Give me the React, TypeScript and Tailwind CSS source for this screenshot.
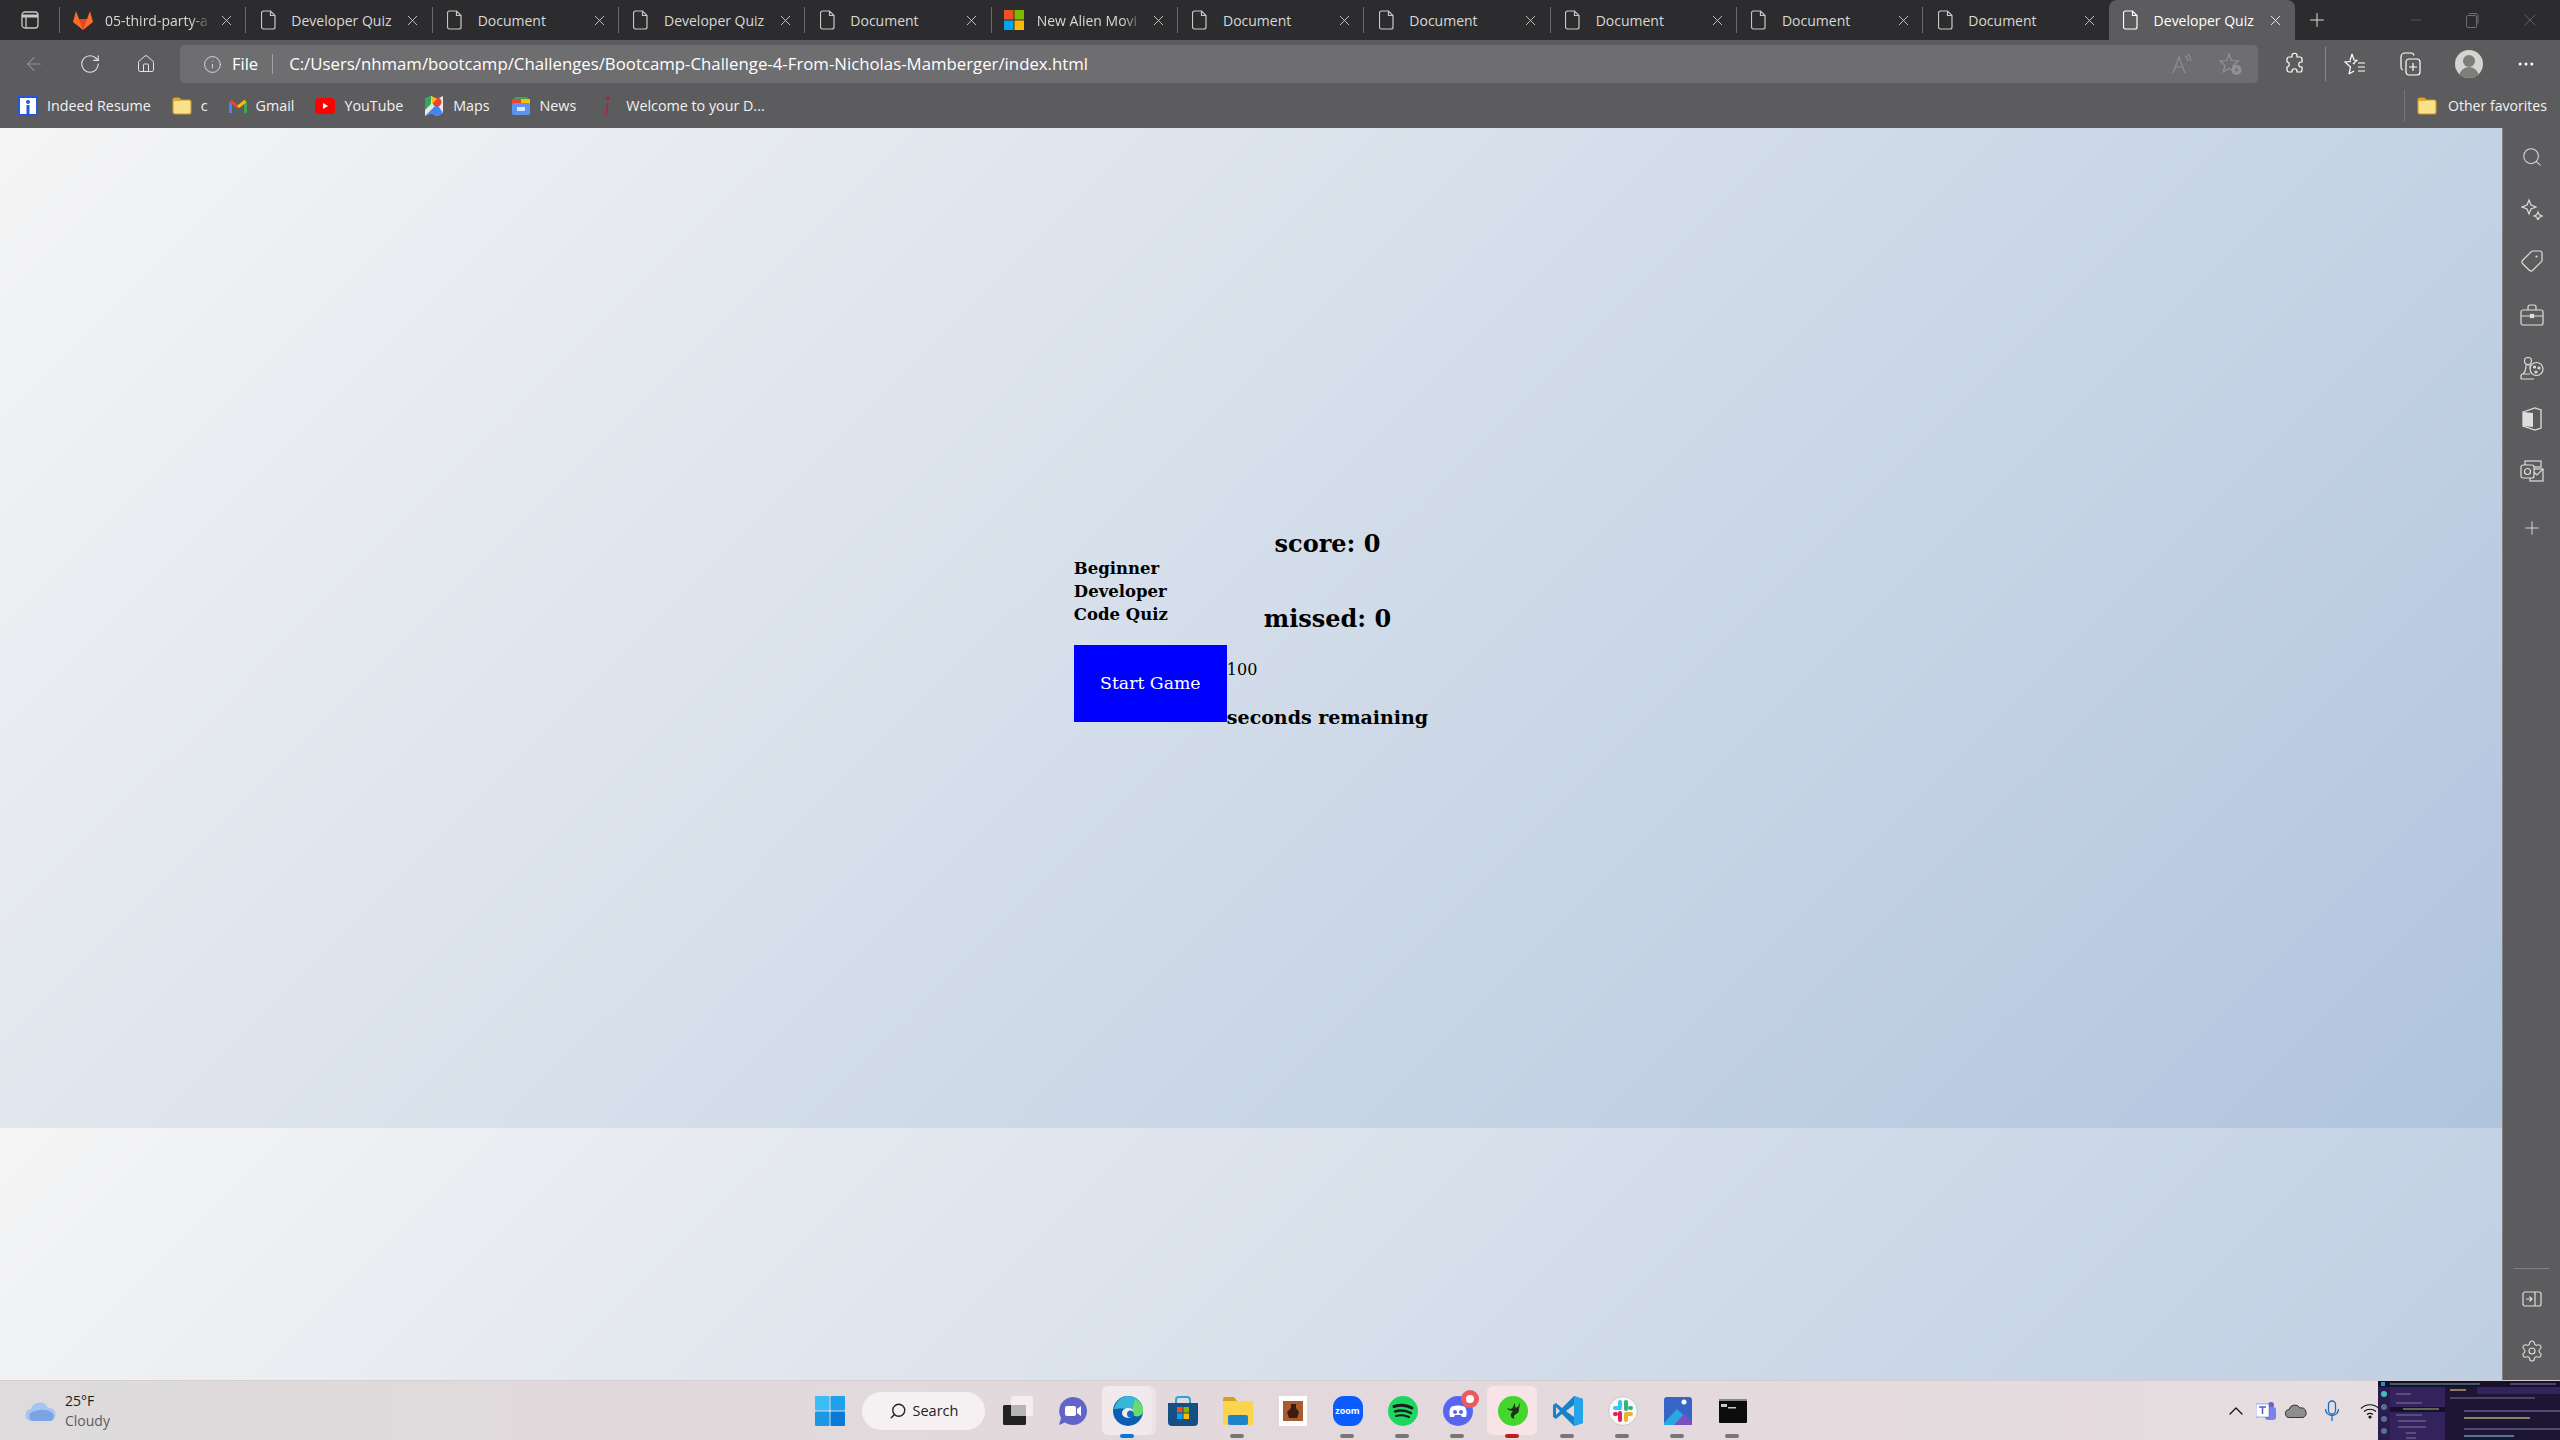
import { ArrowLeft, ChevronUp, Home, Info, Minus, MoreHorizontal, Plus, RotateCw, Search, Settings, Tag, X } from "lucide-react"

const uiFont = "font-['Open_Sans','Noto_Sans',sans-serif]"
const quizFont = "font-['DejaVu_Serif',serif]"

const tabs = [
  { title: "05-third-party-a", icon: "gitlab", fade: true },
  { title: "Developer Quiz", icon: "page" },
  { title: "Document", icon: "page" },
  { title: "Developer Quiz", icon: "page" },
  { title: "Document", icon: "page" },
  { title: "New Alien Movi", icon: "ms", fade: true },
  { title: "Document", icon: "page" },
  { title: "Document", icon: "page" },
  { title: "Document", icon: "page" },
  { title: "Document", icon: "page" },
  { title: "Document", icon: "page" },
  { title: "Developer Quiz", icon: "page", active: true },
]

function PageIcon({ light }: { light?: boolean }) {
  return (
    <svg width="16" height="20" viewBox="0 0 16 20" fill="none" stroke={light ? "#ffffff" : "#c8c8c8"} strokeWidth="1.2">
      <path d="M2.5 1h7l4.5 4.5v11.5a2 2 0 0 1-2 2h-9.500a2 2 0 0 1-2-2v-14a2 2 0 0 1 2-2z" />
      <path d="M9.500 1v4.500h4.500" />
    </svg>
  )
}

function GitlabIcon() {
  return (
    <svg width="22" height="22" viewBox="0 0 22 22">
      <path d="M11 21 1 13l3-11 3 8h8l3-8 3 11z" fill="#fc6d26" />
      <path d="M11 21 7 10h8z" fill="#e24329" />
    </svg>
  )
}

function MsIcon() {
  return (
    <svg width="20" height="20" viewBox="0 0 20 20">
      <rect width="9.500" height="9.500" fill="#f25022" />
      <rect x="10.500" width="9.500" height="9.500" fill="#7fba00" />
      <rect y="10.500" width="9.500" height="9.500" fill="#00a4ef" />
      <rect x="10.500" y="10.500" width="9.500" height="9.500" fill="#ffb900" />
    </svg>
  )
}

function FolderIcon() {
  return (
    <svg width="20" height="18" viewBox="0 0 20 18">
      <path d="M1 3a2 2 0 0 1 2-2h4l2 2h8a2 2 0 0 1 2 2v10a2 2 0 0 1-2 2H3a2 2 0 0 1-2-2z" fill="#fbe28a" stroke="#c99a2e" strokeWidth="1.200" />
      <path d="M1 3a2 2 0 0 1 2-2h4l2 2v1H1z" fill="#e0a92a" />
    </svg>
  )
}

function Tab({ title, icon, active, fade }: { title: string; icon: string; active?: boolean; fade?: boolean }) {
  return (
    <div className={`relative flex h-full w-[186.33px] shrink-0 items-center ${active ? "rounded-t-lg bg-[#5c5c5e] text-white" : "text-[#d8d8d8]"}`}>
      {!active && <div className="h-[26px] w-px shrink-0 bg-[#6a6a6c]" />}
      <div className="flex w-[45px] shrink-0 justify-center">
        {icon === "gitlab" && <GitlabIcon />}
        {icon === "ms" && <MsIcon />}
        {icon === "page" && <PageIcon light={active} />}
      </div>
      <span className={`w-[107px] overflow-hidden text-[14px] whitespace-nowrap ${fade ? "[mask-image:linear-gradient(to_right,black_80%,transparent)]" : ""}`}>{title}</span>
      <X size={17} strokeWidth={1.2} className="ml-[6px] shrink-0" />
    </div>
  )
}

function TabBar() {
  return (
    <div className="flex h-10 shrink-0 items-center bg-[#2c2c2e]">
      <div className="flex w-[59px] shrink-0 justify-center">
        <svg width="18" height="18" viewBox="0 0 18 18" fill="none" stroke="#c8c8c8" strokeWidth="1.300">
          <rect x="1" y="1" width="16" height="16" rx="3" />
          <path d="M1 5h16" strokeWidth="3" />
          <path d="M5 5v12" />
        </svg>
      </div>
      {tabs.map((tab, i) => (
        <Tab key={i} title={tab.title} icon={tab.icon} active={tab.active} fade={tab.fade} />
      ))}
      <Plus size={22} strokeWidth={1.1} className="ml-[11px] text-[#dcdcdc]" />
      <div className="ml-auto flex items-center text-[#6e6e70]">
        <Minus size={16} strokeWidth={1} className="mr-[40px]" />
        <svg width="16" height="16" viewBox="0 0 16 16" fill="none" stroke="currentColor" className="mr-[40px]">
          <rect x="2.500" y="3.500" width="10" height="12" rx="1.500" />
          <path d="M5 1.500h7a2 2 0 0 1 2 2v8" />
        </svg>
        <X size={20} strokeWidth={1} className="mr-[20px]" />
      </div>
    </div>
  )
}

function ToolBar() {
  return (
    <div className="flex h-[44px] shrink-0 items-start bg-[#5c5c5e] pt-[5px] text-[#e4e4e4]">
      <div className="flex h-[38px] w-[180px] shrink-0 items-center pl-[23px]">
        <ArrowLeft size={22} strokeWidth={1.1} className="text-[#929294]" />
        <RotateCw size={22} strokeWidth={1.2} className="ml-[34px]" />
        <Home size={20} strokeWidth={1.2} className="ml-[35px]" />
      </div>
      <div className="flex h-[38px] w-[2078px] shrink-0 items-center rounded-[5px] bg-[#6e6e70] pl-[23px] text-[16.500px]">
        <Info size={19} strokeWidth={1.1} />
        <span className="ml-[10px] text-white">File</span>
        <div className="ml-[14px] h-5 w-px bg-[#a0a0a2]" />
        <span className="ml-[16px] text-[16.800px] text-white">C:/Users/nhmam/bootcamp/Challenges/Bootcamp-Challenge-4-From-Nicholas-Mamberger/index.html</span>
        <div className="ml-auto flex items-center pr-[15px] text-[#929294]">
          <svg width="22" height="22" viewBox="0 0 22 22" fill="none" stroke="currentColor" strokeWidth="1.100">
            <path d="M2 20 8 4l6 16M4.500 14h7M14 3c2 1 3 3 3 5M17 1c2 2 3 4 3 7" />
          </svg>
          <svg width="24" height="24" viewBox="0 0 24 24" fill="none" stroke="currentColor" strokeWidth="1.200" className="ml-[26px]">
            <path d="M10 2l2.500 6.500 7 .5-5.500 4.500 1.800 6.500-5.800-3.800-5.800 3.800 1.800-6.500-5-4.500 7-.5z" />
            <circle cx="17.500" cy="18" r="5" fill="#929294" stroke="none" />
            <path d="M15 18h5M17.500 15.500v5" stroke="#6e6e70" />
          </svg>
        </div>
      </div>
      <div className="flex h-[38px] flex-1 items-center text-white">
        <svg width="20" height="24" viewBox="0 0 20 24" fill="none" stroke="currentColor" strokeWidth="1.200" className="ml-[27px]">
          <path d="M7 3.500c0-3 5-3 5 0v1.500h3a2 2 0 0 1 2 2v3h-1c-3 0-3 5 0 5h1v3a2 2 0 0 1-2 2h-3v-1c0-3-5-3-5 0v1H4a2 2 0 0 1-2-2v-3c3 0 3-5 0-5V7a2 2 0 0 1 2-2h3z" />
        </svg>
        <div className="ml-[20px] h-[34px] w-px bg-[#8a8a8c]" />
        <svg width="24" height="24" viewBox="0 0 24 24" fill="none" stroke="currentColor" strokeWidth="1.200" className="ml-[17px]">
          <path d="M9 2l2 6 3 .3-3.500 3.200 1 .5M6 22l1.500-7-5.500-5 6-.5M6 22l5-3M9 2 7 8.500" />
          <path d="M15 11h7M15 15h7M15 19h7" />
        </svg>
        <svg width="24" height="26" viewBox="0 0 24 26" fill="none" stroke="currentColor" strokeWidth="1.200" className="ml-[31px]">
          <path d="M5 19a3 3 0 0 1-2-3V6a4 4 0 0 1 4-4h6a3 3 0 0 1 3 2.500" />
          <rect x="8" y="8" width="14" height="16" rx="3" />
          <path d="M15 12v8M11 16h8" />
        </svg>
        <div className="relative ml-[33px] h-[28px] w-[28px] overflow-hidden rounded-full bg-[#d6d4d0]">
          <div className="absolute top-[5px] left-[8px] h-3 w-3 rounded-full bg-[#7d7d7b]" />
          <div className="absolute top-[17px] left-[4px] h-5 w-5 rounded-full bg-[#7d7d7b]" />
        </div>
        <MoreHorizontal size={20} strokeWidth={1.600} className="ml-[33px]" />
      </div>
    </div>
  )
}

function Bookmark({ icon, label }: { icon: React.ReactNode; label: string }) {
  return (
    <div className="flex items-center gap-[9px]">
      {icon}
      <span className="text-[14.300px] whitespace-nowrap text-[#f2f2f2]">{label}</span>
    </div>
  )
}

function BookmarksBar() {
  return (
    <div className="flex h-[44px] shrink-0 items-center gap-[21px] bg-[#5c5c5e] pl-[18px]">
      <Bookmark
        label="Indeed Resume"
        icon={
          <svg width="20" height="20" viewBox="0 0 20 20">
            <rect width="20" height="20" fill="#2557d6" />
            <rect x="2" y="2" width="16" height="16" fill="#ffffff" />
            <circle cx="10" cy="6" r="2" fill="#2557d6" />
            <rect x="8.500" y="9" width="3" height="9" fill="#2557d6" />
          </svg>
        }
      />
      <Bookmark label="c" icon={<FolderIcon />} />
      <Bookmark
        label="Gmail"
        icon={
          <svg width="18" height="14" viewBox="0 0 18 14" fill="none" strokeWidth="3">
            <path d="M1.500 14V3" stroke="#4285f4" />
            <path d="M16.500 14V3" stroke="#34a853" />
            <path d="M1.500 2 9 8" stroke="#ea4335" />
            <path d="M9 8l7.500-6" stroke="#fbbc04" />
          </svg>
        }
      />
      <Bookmark
        label="YouTube"
        icon={
          <svg width="20" height="20" viewBox="0 0 20 20">
            <rect y="2" width="20" height="16" rx="4" fill="#ff0000" />
            <path d="M8 7l5 3-5 3z" fill="#ffffff" />
          </svg>
        }
      />
      <Bookmark
        label="Maps"
        icon={
          <svg width="20" height="22" viewBox="0 0 20 22">
            <path d="M1 4l6-3 6 3 6-3v17l-6 3-6-3-6 3z" fill="#e8e8e8" />
            <path d="M1 21l12-12 6 9-6 3-6-3z" fill="#4285f4" />
            <path d="M1 4l6-3v8l-6 6z" fill="#34a853" />
            <circle cx="13" cy="7" r="4.500" fill="#ea4335" />
            <path d="M7 1l6 3-5 5z" fill="#fbbc04" />
          </svg>
        }
      />
      <Bookmark
        label="News"
        icon={
          <svg width="20" height="20" viewBox="0 0 20 20">
            <rect x="3" y="1" width="14" height="8" rx="2" fill="#34a853" />
            <rect x="1" y="3" width="9" height="7" fill="#ea4335" />
            <rect x="10" y="3" width="9" height="7" fill="#fbbc04" />
            <rect x="1" y="7" width="18" height="12" rx="2" fill="#5a95f5" />
            <rect x="6" y="11" width="8" height="4" fill="#d6e4fc" />
          </svg>
        }
      />
      <Bookmark
        label="Welcome to your D..."
        icon={
          <svg width="20" height="22" viewBox="0 0 20 22" fill="none" stroke="#b02040" strokeWidth="1.600">
            <circle cx="11" cy="3" r="1" fill="#b02040" />
            <path d="M11 8 9 20" />
          </svg>
        }
      />
      <div className="ml-auto flex h-[32px] items-center gap-[11px] border-l border-[#77777a] pr-[13px] pl-[12px]">
        <FolderIcon />
        <span className="text-[14.100px] text-[#f2f2f2]">Other favorites</span>
      </div>
    </div>
  )
}

function QuizPage() {
  return (
    <div className="flex h-[1000px] w-full shrink-0 items-center justify-center bg-[linear-gradient(135deg,#f5f5f5,#b0c4de)] text-black">
      <div className={`flex items-center ${quizFont}`}>
        <div className="w-[153px] pt-[23px]">
          <h3 className="mb-[19px] w-[110px] text-[16.500px] leading-[23px] font-bold">Beginner Developer Code Quiz</h3>
          <button className="flex h-[77px] w-[153px] items-center justify-center bg-[#0000ff] text-[17.300px] text-white">Start Game</button>
        </div>
        <div className="flex flex-col">
          <h2 className="text-center text-[24px] leading-[34px] font-bold">score: 0</h2>
          <h2 className="mt-[41px] text-center text-[24px] leading-[34px] font-bold">missed: 0</h2>
          <span className="mt-[24px] text-[16px] leading-[20px]">100</span>
          <h3 className="mt-[26px] text-[19px] leading-[23px] font-bold">seconds remaining</h3>
        </div>
      </div>
    </div>
  )
}

function SideBar() {
  return (
    <div className="flex w-[58px] shrink-0 flex-col items-center border-l border-[#808082] bg-[#5c5c5e] text-[#dedede]">
      <Search size={22} strokeWidth={1.100} className="mt-[18px]" />
      <svg width="22" height="22" viewBox="0 0 22 22" fill="none" stroke="currentColor" strokeWidth="1.200" className="mt-[30px]">
        <path d="M8 2l2 5 5 2-5 2-2 5-2-5-5-2 5-2zM17 14l1.300 2.700 2.700 1.300-2.700 1.300-1.300 2.700-1.300-2.700-2.700-1.300 2.700-1.300z" />
      </svg>
      <Tag size={24} strokeWidth={1.200} className="mt-[29px] -scale-x-100" />
      <svg width="24" height="22" viewBox="0 0 24 22" fill="none" stroke="currentColor" strokeWidth="1.200" className="mt-[31px]">
        <rect x="1" y="6" width="22" height="15" rx="2" />
        <path d="M8 6V3a2 2 0 0 1 2-2h4a2 2 0 0 1 2 2v3M1 12h22" />
        <rect x="10.500" y="10.500" width="3" height="3" fill="currentColor" />
      </svg>
      <svg width="24" height="24" viewBox="0 0 24 24" fill="none" stroke="currentColor" strokeWidth="1.200" className="mt-[30px]">
        <circle cx="8" cy="5" r="3.500" />
        <path d="M5 9h6M6 10c0 4-1 6-3 8M10 10c0 1 0 2 .5 3M1 23v-3a2 2 0 0 1 2-2h7M1 23h13" />
        <circle cx="16.500" cy="13" r="6.500" />
        <circle cx="14.500" cy="11" r="1" fill="currentColor" />
        <circle cx="19" cy="12" r="1" fill="currentColor" />
        <circle cx="16" cy="16" r="1" fill="currentColor" />
      </svg>
      <svg width="22" height="24" viewBox="0 0 22 24" fill="none" stroke="currentColor" strokeWidth="1.300" className="mt-[27px]">
        <path d="M2 5l12-4 6 2v18l-6 2-12-4z" />
        <path d="M2 5l10 1v14l-10-1z" fill="currentColor" stroke="none" />
      </svg>
      <svg width="24" height="22" viewBox="0 0 24 22" fill="none" stroke="currentColor" strokeWidth="1.200" className="mt-[29px]">
        <rect x="5" y="1" width="16" height="6" />
        <rect x="10" y="9" width="13" height="12" />
        <path d="M10 9l7 6 6-6" />
        <rect x="1" y="5" width="13" height="13" rx="2" fill="#5c5c5e" />
        <circle cx="7.500" cy="11.500" r="3" />
      </svg>
      <Plus size={22} strokeWidth={1} className="mt-[35px]" />
      <div className="mt-auto h-px w-[35px] bg-[#808082]" />
      <svg width="20" height="16" viewBox="0 0 20 16" fill="none" stroke="currentColor" strokeWidth="1.200" className="mt-[22px]">
        <rect x="1" y="1" width="18" height="14" rx="2" />
        <path d="M13 1v14M4 8h6M7.500 5.500 10 8l-2.500 2.500" />
      </svg>
      <Settings size={24} strokeWidth={1.100} className="mt-[32px] mb-[17px]" />
    </div>
  )
}

function TaskIcon({ children, dot, bg }: { children: React.ReactNode; dot?: string; bg?: string }) {
  return (
    <div className="relative flex h-full w-[55px] shrink-0 items-center justify-center">
      {bg && <div className={`absolute top-[5px] bottom-[5px] left-[2px] w-[50px] rounded-md ${bg}`} />}
      <div className="relative flex">{children}</div>
      {dot && <div className={`absolute bottom-[2px] left-[20px] h-[4px] w-[14px] rounded-full ${dot}`} />}
    </div>
  )
}

function VsCodeThumb() {
  return (
    <div className="absolute right-0 bottom-0 h-[59px] w-[182px] overflow-hidden bg-[#1d1534]">
      <svg width="182" height="59" viewBox="0 0 182 59">
        <rect width="182" height="6" fill="#17102c" />
        <rect x="3" y="1" width="4" height="4" fill="#2e86d6" />
        <rect x="12" y="2" width="90" height="2" fill="#7fd0c0" opacity="0.400" />
        <rect x="132" y="2" width="46" height="2" fill="#a09ab8" opacity="0.400" />
        <rect y="6" width="12" height="53" fill="#2a1c52" />
        <circle cx="6" cy="13" r="3" fill="#3fc0b0" />
        <circle cx="6" cy="26" r="3" fill="#58708a" />
        <circle cx="6" cy="38" r="3" fill="#58708a" />
        <circle cx="6" cy="50" r="3" fill="#58708a" />
        <rect x="12" y="6" width="55" height="53" fill="#33235c" />
        <rect x="18" y="12" width="15" height="2" fill="#a09ab8" opacity="0.350" />
        <rect x="18" y="21" width="26" height="2" fill="#a09ab8" opacity="0.350" />
        <rect x="12" y="26" width="55" height="5" fill="#17102c" />
        <rect x="25" y="27" width="36" height="2" fill="#b8d080" opacity="0.450" />
        <rect x="18" y="33" width="26" height="2" fill="#a09ab8" opacity="0.350" />
        <rect x="20" y="39" width="28" height="2" fill="#a09ab8" opacity="0.350" />
        <rect x="20" y="45" width="28" height="2" fill="#a09ab8" opacity="0.350" />
        <rect x="28" y="51" width="10" height="2" fill="#a09ab8" opacity="0.350" />
        <rect x="28" y="56" width="10" height="2" fill="#a09ab8" opacity="0.350" />
        <rect x="67" y="6" width="115" height="7" fill="#33235c" />
        <rect x="67" y="6" width="32" height="7" fill="#1d1534" />
        <rect x="72" y="8" width="16" height="2" fill="#e0c070" opacity="0.600" />
        <rect x="72" y="16" width="85" height="2" fill="#a09ab8" opacity="0.350" />
        <rect x="86" y="29" width="96" height="2" fill="#6c6490" opacity="0.700" />
        <rect x="86" y="36" width="66" height="2" fill="#d8c890" opacity="0.600" />
        <rect x="86" y="47" width="96" height="2" fill="#6c6490" opacity="0.700" />
        <rect x="86" y="54" width="50" height="2" fill="#70c0e0" opacity="0.600" />
      </svg>
    </div>
  )
}

function TaskBar() {
  return (
    <div className={`relative flex h-[60px] shrink-0 items-center border-t border-[#d6cdd0] bg-[linear-gradient(to_right,#dddbdb,#e3d8dc_50%,#e6dee1)] ${uiFont}`}>
      <div className="flex w-[802px] shrink-0 items-center pl-[25px]">
        <svg width="32" height="22" viewBox="0 0 32 22">
          <path d="M7 21a6 6 0 0 1-1-12 9 9 0 0 1 17-1 6.500 6.500 0 0 1 2 13z" fill="#a8c4f0" />
          <path d="M7 21a5 5 0 0 1 0-9c8-3 14-3 19 0a5 5 0 0 1 0 9z" fill="#7aa4e4" />
        </svg>
        <div className="ml-[8px] flex flex-col text-[14px] leading-[20px]">
          <span className="text-[#1c1c1c]">25°F</span>
          <span className="text-[#5c5c5c]">Cloudy</span>
        </div>
      </div>
      <TaskIcon>
        <svg width="30" height="30" viewBox="0 0 30 30">
          <rect width="14.500" height="14.500" rx="1" fill="#3dbdf5" />
          <rect x="15.500" width="14.500" height="14.500" rx="1" fill="#1fa0ea" />
          <rect y="15.500" width="14.500" height="14.500" rx="1" fill="#1c97e4" />
          <rect x="15.500" y="15.500" width="14.500" height="14.500" rx="1" fill="#0a78d6" />
        </svg>
      </TaskIcon>
      <div className="ml-[5px] flex h-[38px] w-[123px] shrink-0 items-center justify-center gap-[6px] rounded-full bg-[#f5f0f2] text-[14.500px] text-[#222222]">
        <Search size={18} strokeWidth={1.800} className="-scale-x-100" />
        <span>Search</span>
      </div>
      <div className="ml-[5px] flex h-full">
        <TaskIcon>
          <svg width="30" height="30" viewBox="0 0 30 30">
            <rect y="9" width="23" height="20" rx="1.500" fill="#222222" />
            <rect x="8" y="0" width="22" height="20" rx="1.500" fill="#f4f2f3" opacity="0.850" />
            <rect x="8" y="9" width="15" height="11" fill="#b8b4b6" />
          </svg>
        </TaskIcon>
        <TaskIcon>
          <svg width="30" height="30" viewBox="0 0 30 30">
            <path d="M15 1a14 14 0 1 1-8 25.500L1 29l2-7A14 14 0 0 1 15 1z" fill="#6264c8" />
            <rect x="7" y="10" width="11" height="10" rx="2" fill="#ffffff" />
            <path d="M19 13l4-3v10l-4-3z" fill="#ffffff" />
          </svg>
        </TaskIcon>
        <TaskIcon dot="bg-[#0a78d6]" bg="bg-[#f0eaec] shadow-[4px_0_0_#ebe3e6]">
          <svg width="30" height="30" viewBox="0 0 30 30">
            <circle cx="15" cy="15" r="15" fill="#0c5fb0" />
            <path d="M1 13C3 5 9 0 15 0c8 0 15 6 15 14 0 5-4 7-8 6-4-1-2-6-8-7-5-1-10 0-13 0z" fill="#35b8d8" />
            <path d="M22 3c5 3 8 7 8 11 0 5-4 7-8 6-2-.5-2-3-3-5z" fill="#6bdc6a" />
            <ellipse cx="15" cy="17" rx="6" ry="5" fill="#f0eaec" />
            <circle cx="17.500" cy="18" r="3.500" fill="#0c6fc4" />
          </svg>
        </TaskIcon>
        <TaskIcon>
          <svg width="30" height="30" viewBox="0 0 30 30">
            <path d="M8 7V4a3 3 0 0 1 3-3h8a3 3 0 0 1 3 3v3" fill="none" stroke="#2aa4dc" strokeWidth="2" />
            <path d="M0 7h30v19a4 4 0 0 1-4 4H4a4 4 0 0 1-4-4z" fill="#164f84" />
            <rect x="9" y="11" width="5.500" height="5.500" fill="#f25022" />
            <rect x="15.500" y="11" width="5.500" height="5.500" fill="#7fba00" />
            <rect x="9" y="17.500" width="5.500" height="5.500" fill="#00a4ef" />
            <rect x="15.500" y="17.500" width="5.500" height="5.500" fill="#ffb900" />
          </svg>
        </TaskIcon>
        <TaskIcon dot="bg-[#7a7678]">
          <svg width="30" height="28" viewBox="0 0 30 28">
            <path d="M0 2a2 2 0 0 1 2-2h9l3 4H0z" fill="#d4a020" />
            <rect y="4" width="30" height="24" rx="1.500" fill="#fad44c" />
            <rect x="5" y="18" width="20" height="10" rx="2" fill="#1c84c8" />
          </svg>
        </TaskIcon>
        <TaskIcon>
          <div className="flex h-[30px] w-[28px] items-center justify-center bg-white">
            <svg width="20" height="20" viewBox="0 0 20 20">
              <rect width="20" height="20" fill="#a85c30" />
              <path d="M8 3h5v4l3 4-2 6H6l-2-6 4-4z" fill="#3a1c10" />
            </svg>
          </div>
        </TaskIcon>
        <TaskIcon dot="bg-[#7a7678]">
          <div className="flex h-[30px] w-[30px] items-center justify-center rounded-[11px] bg-[#0b5cff] text-[9px] font-bold text-white">zoom</div>
        </TaskIcon>
        <TaskIcon dot="bg-[#7a7678]">
          <svg width="30" height="30" viewBox="0 0 30 30" fill="none" stroke="#1c1c1c" strokeLinecap="round">
            <circle cx="15" cy="15" r="15" fill="#1ed760" stroke="none" />
            <path d="M6 10.500c6-2 13-1.500 18 1.500" strokeWidth="3" />
            <path d="M7 15.500c5-1.500 11-1 16 1.500" strokeWidth="2.500" />
            <path d="M8 20c4-1 9-.8 13 1" strokeWidth="2" />
          </svg>
        </TaskIcon>
        <TaskIcon dot="bg-[#7a7678]">
          <svg width="36" height="36" viewBox="0 0 36 36" className="-mt-[6px] -mr-[6px]">
            <circle cx="15" cy="21" r="15" fill="#5865f2" />
            <path d="M8 17c4-2 10-2 14 0 2 3 2 7 1 10l-4 0-1-2h-6l-1 2-4 0c-1-3-1-7 1-10z" fill="#ffffff" />
            <circle cx="12" cy="22" r="2" fill="#5865f2" />
            <circle cx="18" cy="22" r="2" fill="#5865f2" />
            <circle cx="27" cy="9" r="9" fill="#ea5a5f" />
            <circle cx="27" cy="9" r="4" fill="#ffffff" />
          </svg>
        </TaskIcon>
        <TaskIcon dot="bg-[#c0201c]" bg="bg-[#f8e4e6]">
          <svg width="30" height="30" viewBox="0 0 30 30">
            <circle cx="15" cy="15" r="15" fill="#44d62c" />
            <path d="M21 6c1 3-1 5-3 6-1-1-1-3-1-5-2 3-2 6-5 6l-3-1c1 2 3 3 6 3-2 2-3 4-1 7l3 1c-2-2-1-4 1-5 3-1 3-4 3-6 1-2 1-4 0-6z" fill="#1c3018" />
          </svg>
        </TaskIcon>
        <TaskIcon dot="bg-[#7a7678]">
          <svg width="30" height="30" viewBox="0 0 30 30">
            <path d="M21 0 9 12 3 7 0 9v12l3 2 6-5 12 12 9-3V3z" fill="#1a80c8" />
            <path d="M21 0v30l9-3V3z" fill="#25a4ea" />
            <path d="M21 9v12l-8-6z" fill="#e3d8dc" />
            <path d="M3 11v8l4-4z" fill="#e3d8dc" />
          </svg>
        </TaskIcon>
        <TaskIcon dot="bg-[#7a7678]">
          <svg width="30" height="30" viewBox="0 0 30 30" strokeWidth="4" strokeLinecap="round" fill="none">
            <circle cx="15" cy="15" r="14.500" fill="#f8f6f6" stroke="#c8c4c6" strokeWidth="1" />
            <path d="M12 6v5M7 12h5" stroke="#36c5f0" />
            <path d="M18 6v7M22 12h1" stroke="#2eb67d" />
            <path d="M18 24v-5M23 18h-5" stroke="#ecb22e" />
            <path d="M12 24v-7M8 18h-1" stroke="#e01e5a" />
          </svg>
        </TaskIcon>
        <TaskIcon dot="bg-[#7a7678]">
          <svg width="28" height="28" viewBox="0 0 28 28">
            <rect width="28" height="28" rx="3" fill="#3864c8" />
            <path d="M0 26l13-14 15 14v2H0z" fill="#28a8e0" />
            <path d="M10 28l10-11 8 8v3z" fill="#7c50c0" />
            <circle cx="20" cy="5" r="2.500" fill="#ffffff" />
          </svg>
        </TaskIcon>
        <TaskIcon dot="bg-[#7a7678]">
          <svg width="28" height="24" viewBox="0 0 28 24">
            <rect width="28" height="24" rx="1" fill="#0c0c0c" />
            <rect width="28" height="2" fill="#8a8a8a" />
            <rect x="2" y="5" width="6" height="3" fill="#c8c8c8" />
            <rect x="9" y="8" width="8" height="1.500" fill="#c8c8c8" />
          </svg>
        </TaskIcon>
      </div>
      <div className="ml-auto flex items-center pr-[180px]">
        <ChevronUp size={24} strokeWidth={1.300} className="text-[#111111]" />
        <svg width="20" height="20" viewBox="0 0 20 20" className="ml-[8px]">
          <circle cx="15" cy="4" r="3" fill="#6264c8" />
          <rect x="9" y="6" width="11" height="13" rx="3" fill="#7b83eb" />
          <rect y="3" width="13" height="13" fill="#ffffff" stroke="#5059c9" strokeWidth="0.500" />
          <path d="M3 6h7M6.500 6v7" stroke="#5059c9" strokeWidth="1.500" />
        </svg>
        <svg width="22" height="14" viewBox="0 0 22 14" className="ml-[9px]">
          <path d="M5 13.500a4 4 0 0 1-1-8 6 6 0 0 1 11-1.500 5 5 0 0 1 3 9.500z" fill="#8e8e8e" stroke="#333333" strokeWidth="1" />
        </svg>
        <svg width="16" height="22" viewBox="0 0 16 22" fill="none" stroke="#1a6cc4" strokeWidth="1.300" className="ml-[17px]">
          <rect x="4.500" y="1" width="7" height="13" rx="3.500" />
          <path d="M1.500 9a6.500 6.500 0 0 0 13 0M8 15.500V21" />
        </svg>
        <svg width="20" height="16" viewBox="0 0 20 16" fill="none" stroke="#111111" strokeWidth="1.200" className="ml-[20px]">
          <path d="M1 5.500c5-5 13-5 18 0M4 8.500c3.500-3 8.500-3 12 0M7 11.500c2-1.500 4-1.500 6 0" />
          <circle cx="10" cy="14" r="1" fill="#111111" />
        </svg>
      </div>
      <VsCodeThumb />
    </div>
  )
}

export default function App() {
  return (
    <div className={`flex h-screen w-full flex-col overflow-hidden ${uiFont}`}>
      <TabBar />
      <ToolBar />
      <BookmarksBar />
      <div className="flex min-h-0 flex-1">
        <div className="flex min-w-0 flex-1 flex-col overflow-hidden">
          <QuizPage />
          {/* body gradient repeats below the first 1000px */}
          <div className="h-[1000px] shrink-0 bg-[linear-gradient(135deg,#f5f5f5,#b0c4de)]" />
        </div>
        <SideBar />
      </div>
      <TaskBar />
    </div>
  )
}
